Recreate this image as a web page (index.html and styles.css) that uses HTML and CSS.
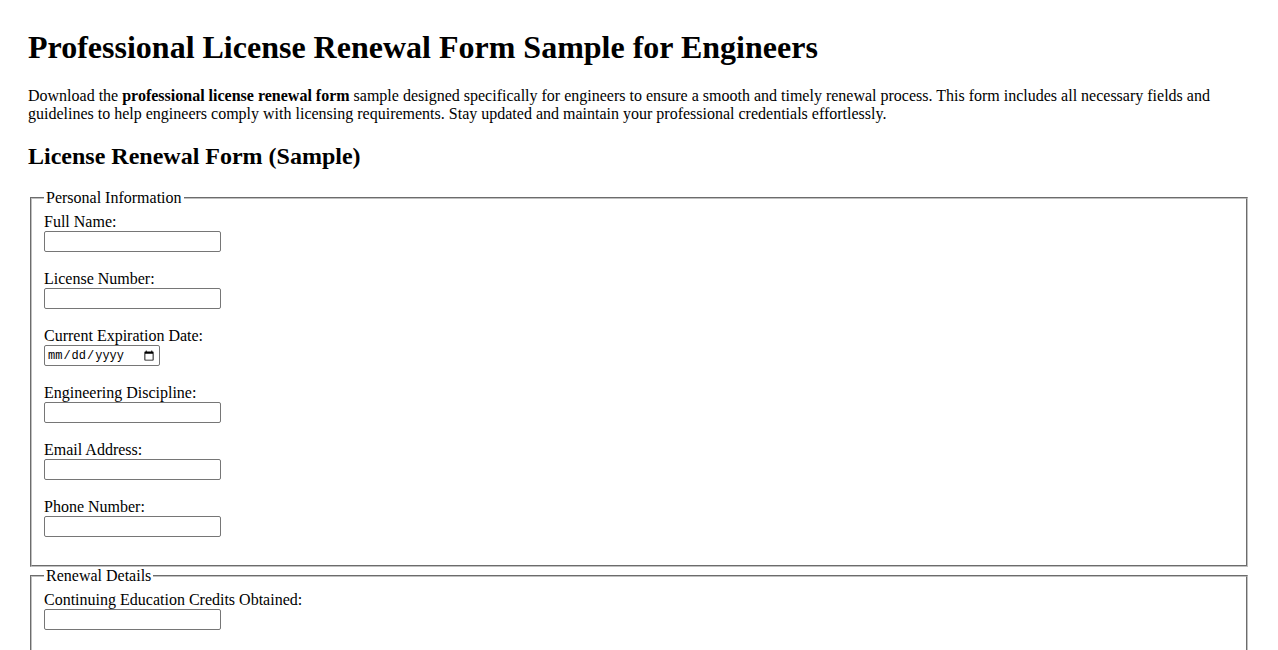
FILE: index.html
```html
<!DOCTYPE html>
<html lang="en">
<head>
<meta charset="utf-8">
<title>Professional License Renewal Form Sample for Engineers</title>
<link rel="stylesheet" href="styles.css">
</head>
<body>
<div class="page">
  <h1 class="title">Professional License Renewal Form Sample for Engineers</h1>
  <p class="intro">Download the <strong>professional license renewal form</strong> sample designed specifically for engineers to ensure a smooth and timely renewal process. This form includes all necessary fields and guidelines to help engineers comply with licensing requirements. Stay updated and maintain your professional credentials effortlessly.</p>
  <h2 class="subtitle">License Renewal Form (Sample)</h2>
  <form class="form">
    <fieldset class="group">
      <legend class="legend">Personal Information</legend>
      <div class="field"><label for="fullname">Full Name:</label><input class="text" id="fullname" type="text"></div>
      <div class="field"><label for="license">License Number:</label><input class="text" id="license" type="text"></div>
      <div class="field"><label for="expiry">Current Expiration Date:</label><input class="date" id="expiry" type="date"></div>
      <div class="field"><label for="discipline">Engineering Discipline:</label><input class="text" id="discipline" type="text"></div>
      <div class="field"><label for="email">Email Address:</label><input class="text" id="email" type="email"></div>
      <div class="field"><label for="phone">Phone Number:</label><input class="text" id="phone" type="tel"></div>
    </fieldset>
    <fieldset class="group">
      <legend class="legend">Renewal Details</legend>
      <div class="field"><label for="credits">Continuing Education Credits Obtained:</label><input class="text" id="credits" type="text"></div>
    </fieldset>
  </form>
</div>
</body>
</html>
```

FILE: styles.css
```css
html, body {
  margin: 0;
  padding: 0;
  background: #ffffff;
}
body {
  font-family: "Liberation Serif", "Times New Roman", serif;
  font-size: 16px;
  color: #000000;
}
.page {
  padding: 29px 28px 20px 28px;
}
.title {
  font-size: 32px;
  font-weight: bold;
  margin: 0 0 21px 0;
  line-height: 37px;
}
.intro {
  margin: 0 0 19px 0;
  line-height: 18px;
}
.subtitle {
  font-size: 24px;
  font-weight: bold;
  margin: 0 0 19px 0;
  line-height: 28px;
}
.form {
  display: flex;
  flex-direction: column;
  gap: 0;
}
.group {
  margin: 0 2px;
  padding: 6px 12px 10px 12px;
  border: 2px groove #c0c0c0;
  display: flex;
  flex-direction: column;
  min-width: 0;
}
.legend {
  padding: 0 2px;
  line-height: 18px;
}
.field {
  display: flex;
  flex-direction: column;
  align-items: flex-start;
  margin-bottom: 18px;
}
.field label {
  line-height: 18px;
  height: 18px;
}
.text, .date {
  box-sizing: border-box;
  height: 21px;
  border: 1px solid #767676;
  border-radius: 2px;
  padding: 1px 2px;
  font-family: "Liberation Sans", Arial, sans-serif;
  font-size: 13.33px;
  background: #ffffff;
  margin: 0;
}
.text {
  width: 177px;
}
.date {
  width: 116px;
  font-family: "Liberation Mono", "DejaVu Sans Mono", monospace;
  font-size: 12px;
  color: #000000;
}
```
